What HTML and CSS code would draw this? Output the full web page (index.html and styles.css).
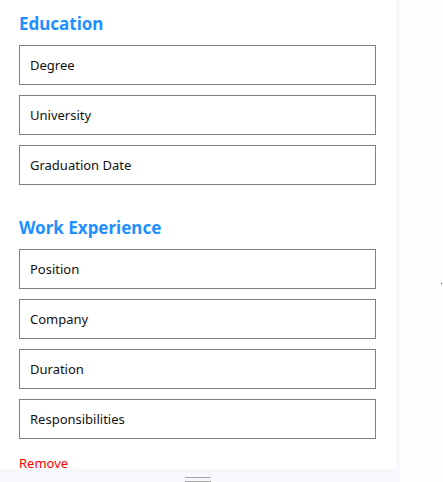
FILE: index.html
```html
<!DOCTYPE html>
<html>
<head>
<meta charset="utf-8">
<link rel="stylesheet" href="styles.css">
</head>
<body>
<div class="app">
  <div class="left">
    <div class="panel">
      <section class="section">
        <h3 class="title">Education</h3>
        <input class="field" placeholder="Degree">
        <input class="field" placeholder="University">
        <input class="field" placeholder="Graduation Date">
      </section>
      <section class="section second">
        <h3 class="title">Work Experience</h3>
        <input class="field" placeholder="Position">
        <input class="field" placeholder="Company">
        <input class="field" placeholder="Duration">
        <input class="field" placeholder="Responsibilities">
        <a class="remove">Remove</a>
      </section>
    </div>
    <div class="bottom">
      <div class="handle"></div>
    </div>
  </div>
  <div class="right"><span class="dot"></span></div>
</div>
</body>
</html>
```
FILE: styles.css
```css
html, body {
  margin: 0;
  padding: 0;
  width: 443px;
  height: 482px;
  overflow: hidden;
  font-family: "Noto Sans", "Open Sans", sans-serif;
}
.app {
  display: flex;
  height: 482px;
}
.left {
  width: 400px;
  background: #f7f8fc;
  display: flex;
  flex-direction: column;
}
.panel {
  width: 396px;
  height: 469px;
  background: #ffffff;
  overflow: hidden;
  box-sizing: border-box;
  padding: 13px 0 0 19px;
}
.section {
  display: flex;
  flex-direction: column;
}
.second {
  margin-top: 22px;
}
.title {
  margin: 0 0 10px;
  font-size: 17px;
  line-height: 22px;
  font-weight: 700;
  color: #1e90ff;
}
.field {
  width: 357px;
  height: 40px;
  box-sizing: border-box;
  border: 1px solid #808080;
  border-radius: 0;
  margin: 0 0 10px;
  padding: 0 10px;
  font-family: inherit;
  font-size: 13px;
  color: #000;
  background: #fff;
  outline: none;
}
.field::placeholder {
  color: #111;
  opacity: 1;
}
.remove {
  margin-top: 5px;
  font-size: 13px;
  line-height: 18px;
  color: #ff0000;
}
.bottom {
  flex: 1;
  display: flex;
  justify-content: flex-start;
  padding-left: 185px;
}
.handle {
  width: 26px;
  height: 2px;
  margin-top: 8px;
  border-top: 1px solid #a8a8a8;
  border-bottom: 1px solid #a8a8a8;
  padding-top: 1px;
  box-sizing: content-box;
}
.right {
  flex: 1;
  background: #fdfdfe;
  position: relative;
}
.dot {
  position: absolute;
  left: 41px;
  top: 283px;
  width: 1px;
  height: 1px;
  background: #2020ff;
}
```
